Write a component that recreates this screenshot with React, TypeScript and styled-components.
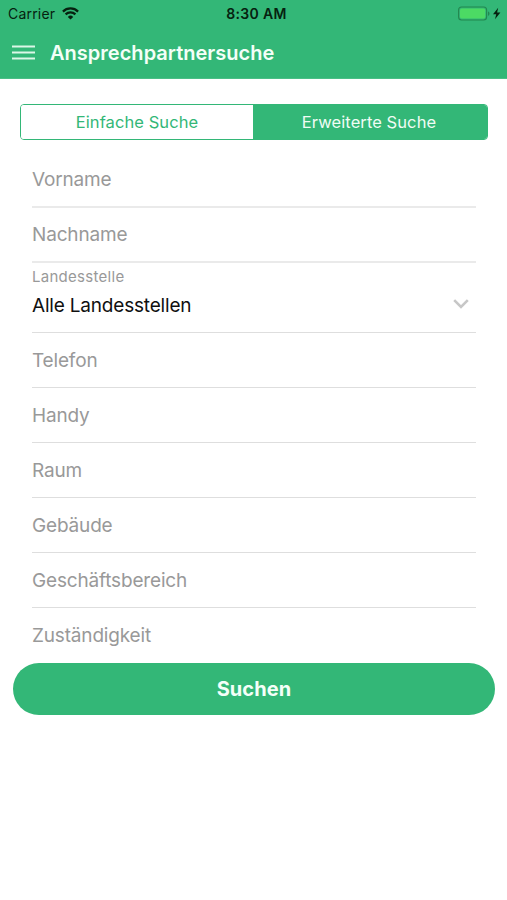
import React from "react";
import styled, { createGlobalStyle } from "styled-components";

const GREEN = "#33b777";

const GlobalStyle = createGlobalStyle`
  * { box-sizing: border-box; }
  body {
    margin: 0;
    background: #fff;
    font-family: Inter, "Liberation Sans", sans-serif;
  }
`;

const Screen = styled.div`
  width: 507px;
  height: 900px;
  overflow: hidden;
  background: #fff;
`;

const Header = styled.header`
  height: 79px;
  background: ${GREEN};
  border-bottom: 1px solid #4abf86;
`;

const StatusBar = styled.div`
  display: grid;
  grid-template-columns: 1fr auto 1fr;
  align-items: center;
  height: 27px;
  padding: 0 6px 0 8px;
  color: #06210f;
  font-size: 14px;
  line-height: 27px;
`;

const Carrier = styled.div`
  display: flex;
  align-items: center;
  gap: 7px;
  letter-spacing: 0.2px;
`;

const Clock = styled.div`
  font-weight: 600;
  letter-spacing: 0.35px;
  padding-left: 4px;
`;

const Power = styled.div`
  display: flex;
  justify-content: flex-end;
`;

const TitleBar = styled.div`
  display: flex;
  align-items: center;
  gap: 15px;
  height: 51px;
  padding-left: 12px;
`;

const Title = styled.h1`
  margin: 0;
  padding-top: 1px;
  color: #f4fff8;
  font-size: 20px;
  font-weight: 600;
  line-height: 51px;
  letter-spacing: 0.02px;
`;

const Segments = styled.div`
  display: flex;
  height: 36px;
  margin: 25px 19px 0 20px;
  border: 1px solid ${GREEN};
  border-radius: 4px;
  overflow: hidden;
`;

const Segment = styled.button<{ $active?: boolean }>`
  flex: ${(p) => (p.$active ? "1" : "0 0 232px")};
  padding: 0 ${(p) => (p.$active ? 2 : 0)}px 0 0;
  border: 0;
  font: 400 16.5px/34px Inter, "Liberation Sans", sans-serif;
  letter-spacing: 0.08px;
  color: ${(p) => (p.$active ? "#effcf4" : GREEN)};
  background: ${(p) => (p.$active ? GREEN : "#fff")};
`;

const Form = styled.form`
  margin: 13px 31px 0 32px;
`;

const Field = styled.div<{ $line?: "soft" | "none" }>`
  height: 55px;
  border-bottom: ${(p) =>
    p.$line === "none" ? "0" : p.$line === "soft" ? "2px solid #eaeaea" : "1px solid #dedede"};
  color: #999;
  font-size: 19px;
  letter-spacing: -0.17px;
  line-height: ${(p) => (p.$line === "soft" ? 53 : 55)}px;
`;

const SelectField = styled.div`
  display: flex;
  align-items: flex-start;
  justify-content: space-between;
  height: 70px;
  padding-right: 7px;
  border-bottom: 1px solid #dedede;
`;

const SelectText = styled.div`
  display: flex;
  flex-direction: column;
  padding-top: 4px;
`;

const SelectLabel = styled.span`
  color: #999;
  font-size: 15px;
  line-height: 20px;
  letter-spacing: 0.28px;
`;

const SelectValue = styled.span`
  margin-top: 6px;
  color: #101010;
  font-size: 19px;
  line-height: 26px;
  letter-spacing: -0.19px;
`;

const ChevronSlot = styled.div`
  display: flex;
  padding-top: 36px;
`;

const Submit = styled.button`
  display: block;
  width: 482px;
  height: 52px;
  margin-left: 13px;
  padding: 0;
  border: 0;
  border-radius: 26px;
  background: ${GREEN};
  color: #f4fff8;
  font: 700 20px/52px Inter, "Liberation Sans", sans-serif;
  letter-spacing: 0.1px;
`;

const WifiIcon = () => (
  <svg width="17" height="13" viewBox="0 0 17 13" fill="none" stroke="#06210f" strokeWidth="2.2">
    <path d="M0.9 4.6a10.8 10.8 0 0 1 15.2 0" />
    <path d="M3.6 7.4a7 7 0 0 1 9.8 0" />
    <path d="M8.5 12.6 5.8 9.9a3.8 3.8 0 0 1 5.4 0z" fill="#06210f" stroke="none" />
  </svg>
);

const BatteryIcon = () => (
  <svg width="43" height="15" viewBox="0 0 43 15">
    <rect x="0.6" y="1" width="28" height="13" rx="3" fill="none" stroke="#23874f" strokeWidth="1.1" />
    <rect x="2" y="2.4" width="25.2" height="10.2" rx="1.8" fill="#4cda64" />
    <path d="M30 5.4c2 .5 2 3.8 0 4.3z" fill="#23874f" />
    <path d="M40.2 1.7 35 8.2h3.2L37 13.2l5.4-6.6h-3.3z" fill="#06210f" />
  </svg>
);

const MenuIcon = () => (
  <svg width="23" height="15" viewBox="0 0 23 15" stroke="#dcf7e7" strokeWidth="1.9">
    <path d="M0 1.5h23M0 7.5h23M0 13.5h23" />
  </svg>
);

const ChevronIcon = () => (
  <svg width="16" height="10" viewBox="0 0 16 10" fill="none" stroke="#c7c7c7" strokeWidth="2.6">
    <path d="M1.2 1.2 8 8l6.8-6.8" />
  </svg>
);

export default function App() {
  return (
    <Screen>
      <GlobalStyle />
      <Header>
        <StatusBar>
          <Carrier>
            <span>Carrier</span>
            <WifiIcon />
          </Carrier>
          <Clock>8:30 AM</Clock>
          <Power>
            <BatteryIcon />
          </Power>
        </StatusBar>
        <TitleBar>
          <MenuIcon />
          <Title>Ansprechpartnersuche</Title>
        </TitleBar>
      </Header>
      <Segments>
        <Segment type="button">Einfache Suche</Segment>
        <Segment type="button" $active>
          Erweiterte Suche
        </Segment>
      </Segments>
      <Form>
        <Field $line="soft">Vorname</Field>
        <Field $line="soft">Nachname</Field>
        <SelectField>
          <SelectText>
            <SelectLabel>Landesstelle</SelectLabel>
            <SelectValue>Alle Landesstellen</SelectValue>
          </SelectText>
          <ChevronSlot>
            <ChevronIcon />
          </ChevronSlot>
        </SelectField>
        <Field>Telefon</Field>
        <Field>Handy</Field>
        <Field>Raum</Field>
        <Field>Gebäude</Field>
        <Field>Geschäftsbereich</Field>
        <Field $line="none">Zuständigkeit</Field>
      </Form>
      <Submit type="button">Suchen</Submit>
    </Screen>
  );
}
